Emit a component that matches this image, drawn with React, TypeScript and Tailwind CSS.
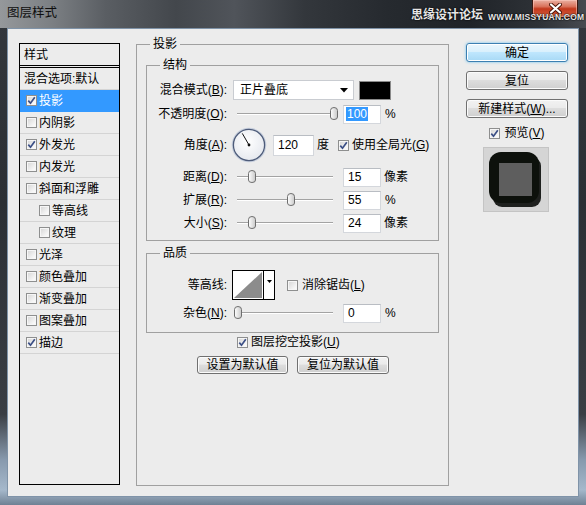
import React from "react";

function U({ children }: { children: React.ReactNode }) {
  return <span className="underline underline-offset-[1px]">{children}</span>;
}

function Check({ checked }: { checked?: boolean }) {
  return (
    <span className="inline-flex w-[11px] h-[11px] shrink-0 items-center justify-center border border-[#8e8f8f] bg-[linear-gradient(135deg,#d4d4d4_0%,#f4f4f4_70%,#ffffff_100%)] shadow-[inset_0_0_0_1px_#f6f6f6]">
      {checked && (
        <svg width="9" height="9" viewBox="0 0 9 9">
          <path d="M1.3 4.6 L3.5 7.2 L7.8 1.2" stroke="#3b4f86" strokeWidth="1.7" fill="none" />
        </svg>
      )}
    </span>
  );
}

function Label({ children }: { children: React.ReactNode }) {
  return <div className="w-[80px] shrink-0 text-right leading-[16px] whitespace-nowrap">{children}</div>;
}

function Thumb() {
  return (
    <svg width="8" height="13" viewBox="0 0 8 13">
      <defs>
        <linearGradient id="tg" x1="0" x2="1" y1="0" y2="0">
          <stop offset="0" stopColor="#ffffff" />
          <stop offset="1" stopColor="#c9c9c9" />
        </linearGradient>
      </defs>
      <path d="M0.5 3.5 Q0.5 0.5 4 0.5 Q7.5 0.5 7.5 3.5 L7.5 10 Q7.5 12.5 4 12.5 Q0.5 12.5 0.5 10 Z" fill="url(#tg)" stroke="#6e6e6e" strokeWidth="1" />
    </svg>
  );
}

function Slider({ thumb }: { thumb: string }) {
  return (
    <div className="relative ml-[6px] w-[105px] h-[20px] shrink-0">
      <div className="absolute left-[4px] right-[5px] top-[9px] h-[2px] border-t border-[#a3a3a3] border-b border-b-[#ffffff]" />
      <div className={`absolute top-[3px] ${thumb}`}>
        <Thumb />
      </div>
    </div>
  );
}

function Input({ children, w = "w-[38px]", h = "h-[19px]", ml = "ml-[5px]" }: { children: React.ReactNode; w?: string; h?: string; ml?: string }) {
  return (
    <div className={`${w} ${h} ${ml} shrink-0 bg-white border border-[#d4d7dc] border-t-[#b9bdc3] flex items-center pl-[2px] leading-[14px]`}>
      {children}
    </div>
  );
}

function Btn({ children, w = "w-full", h = "h-[19px]", def, extra = "" }: { children: React.ReactNode; w?: string; h?: string; def?: boolean; extra?: string }) {
  const base = def
    ? "border-[#3c7fb1] bg-[linear-gradient(180deg,#eaf6fd_0%,#d9f0fc_45%,#bee6fd_50%,#a7d9f5_100%)] shadow-[inset_0_0_0_1px_#ffffff,0_0_3px_#6cc1f0]"
    : "border-[#707070] bg-[linear-gradient(180deg,#f2f2f2_0%,#ebebeb_45%,#dddddd_50%,#cfcfcf_100%)] shadow-[inset_0_0_0_1px_#fbfbfb]";
  return (
    <div className={`${w} ${h} ${extra} shrink-0 border rounded-[3px] flex items-center justify-center leading-[14px] ${base}`}>
      {children}
    </div>
  );
}

const layers: { name: string; checked?: boolean; sel?: boolean; indent?: boolean }[] = [
  { name: "投影", checked: true, sel: true },
  { name: "内阴影" },
  { name: "外发光", checked: true },
  { name: "内发光" },
  { name: "斜面和浮雕" },
  { name: "等高线", indent: true },
  { name: "纹理", indent: true },
  { name: "光泽" },
  { name: "颜色叠加" },
  { name: "渐变叠加" },
  { name: "图案叠加" },
  { name: "描边", checked: true },
];

export default function App() {
  return (
    <div className="relative w-[586px] h-[505px] overflow-hidden flex flex-col text-[12px] text-black font-['Liberation_Sans','Noto_Sans_CJK_SC',sans-serif] bg-[linear-gradient(180deg,#34383d_0%,#2b2f34_40%,#3a3e44_82%,#8799ad_91%,#a5b8cb_97%,#6f8194_100%)]">
      {/* title bar */}
      <div className="h-[28px] shrink-0 flex items-start bg-[linear-gradient(90deg,#95989b_0%,#7b7f83_9%,#5a5e63_18%,#43474c_30%,#50545a_40%,#33373c_52%,#262a2f_66%,#1f2328_80%,#2e3237_92%,#474b50_100%)]">
        <span className="ml-[7px] mt-[5px] text-[12.5px] leading-[16px] text-[#0e0e0e]">图层样式</span>
        <div className="ml-auto mr-[8px] w-[46px] h-[18px] rounded-b-[5px] border border-t-0 border-[#3d1810] flex items-center justify-center bg-[linear-gradient(180deg,#eab0a2_0%,#d9735c_38%,#c2381c_52%,#cf5031_80%,#e0795a_100%)] shadow-[inset_0_0_0_1px_rgba(255,210,200,0.5)]">
          <svg width="13" height="11" viewBox="0 0 13 11">
            <path d="M2 1.5 L11 9.5 M11 1.5 L2 9.5" stroke="#4a1408" strokeWidth="4" strokeLinecap="round" />
            <path d="M2 1.5 L11 9.5 M11 1.5 L2 9.5" stroke="#ffffff" strokeWidth="2.2" strokeLinecap="round" />
          </svg>
        </div>
      </div>
      {/* watermark overlay */}
      <div className="absolute z-20 left-[411px] top-[9px] flex items-end gap-[5px] text-[#e6e6e6] [text-shadow:0_0_2px_#000,0_0_1px_#000]">
        <span className="text-[12px] leading-[13px] font-bold">思缘设计论坛</span>
        <span className="text-[8.5px] leading-[10px] font-bold tracking-[0.2px]">WWW.MISSYUAN.COM</span>
      </div>

      {/* client */}
      <div className="flex-1 mx-[7px] mb-[8px] border border-[#7f93a8] bg-[#ececec] flex items-start pl-[11px] pt-[14px]">
        {/* left list */}
        <div className="w-[101px] h-[442px] shrink-0 border border-black flex flex-col">
          <div className="h-[21px] flex items-center pl-[4px] leading-[16px]">样式</div>
          <div className="h-[3px] border-y border-black" />
          <div className="h-[22px] flex items-center pl-[4px] border-b border-[#d4d4d4] leading-[16px] whitespace-nowrap">混合选项:默认</div>
          {layers.map((l) => (
            <div
              key={l.name}
              className={`h-[22px] flex items-center border-b border-[#d4d4d4] leading-[16px] ${l.indent ? "pl-[19px]" : "pl-[6px]"} ${l.sel ? "bg-[#3399ff] text-white border-b-[#3399ff]" : ""}`}
            >
              <Check checked={l.checked} />
              <span className="ml-[2px]">{l.name}</span>
            </div>
          ))}
        </div>

        {/* middle group 投影 */}
        <div className="relative ml-[16px] mt-[1px] w-[313px] h-[442px] shrink-0 border border-[#a0a0a0] flex flex-col pl-[9px]">
          <span className="absolute left-[13px] top-[-9px] px-[3px] bg-[#ececec] leading-[16px]">投影</span>

          {/* 结构 */}
          <div className="relative mt-[20px] w-[293px] h-[176px] shrink-0 border border-[#a0a0a0] flex flex-col">
            <span className="absolute left-[13px] top-[-9px] px-[3px] bg-[#ececec] leading-[16px]">结构</span>

            <div className="mt-[14px] h-[20px] flex items-center">
              <Label>
                混合模式(<U>B</U>):
              </Label>
              <div className="ml-[6px] w-[121px] h-[20px] shrink-0 bg-white border border-[#c9ccd1] flex items-center pl-[6px] leading-[16px]">
                正片叠底
                <svg className="ml-auto mr-[5px]" width="8" height="5" viewBox="0 0 8 5">
                  <path d="M0 0 L8 0 L4 4.5 Z" fill="#000" />
                </svg>
              </div>
              <div className="ml-[5px] w-[32px] h-[19px] shrink-0 bg-black border border-[#8a8a8a]" />
            </div>

            <div className="mt-[4px] h-[20px] flex items-center">
              <Label>
                不透明度(<U>O</U>):
              </Label>
              <Slider thumb="left-[97px]" />
              <Input>
                <span className="bg-[#3399ff] text-white px-[1px]">100</span>
              </Input>
              <span className="ml-[4px]">%</span>
            </div>

            <div className="mt-[3px] h-[36px] flex items-center">
              <Label>
                角度(<U>A</U>):
              </Label>
              <div className="ml-[4px] w-[36px] h-[36px] shrink-0">
                <svg width="36" height="36" viewBox="0 0 36 36">
                  <defs>
                    <radialGradient id="dg" cx="0.45" cy="0.4" r="0.6">
                      <stop offset="0" stopColor="#ffffff" />
                      <stop offset="1" stopColor="#e6e9ef" />
                    </radialGradient>
                  </defs>
                  <circle cx="18" cy="18" r="16.6" fill="none" stroke="#c8d0de" strokeWidth="1.4" />
                  <circle cx="18" cy="18" r="15.6" fill="url(#dg)" stroke="#4d5b79" strokeWidth="1.3" />
                  <line x1="18" y1="18" x2="11.3" y2="6.4" stroke="#111" strokeWidth="1" />
                  <circle cx="18" cy="18" r="1.4" fill="#111" />
                </svg>
              </div>
              <Input w="w-[41px]" h="h-[21px]" ml="ml-[6px]">
                <span className="pl-[2px]">120</span>
              </Input>
              <span className="ml-[3px]">度</span>
              <span className="ml-[9px] flex items-center">
                <Check checked />
              </span>
              <span className="ml-[3px] whitespace-nowrap">
                使用全局光(<U>G</U>)
              </span>
            </div>

            <div className="mt-[4px] h-[20px] flex items-center">
              <Label>
                距离(<U>D</U>):
              </Label>
              <Slider thumb="left-[15px]" />
              <Input>
                <span className="pl-[2px]">15</span>
              </Input>
              <span className="ml-[3px]">像素</span>
            </div>

            <div className="mt-[3px] h-[20px] flex items-center">
              <Label>
                扩展(<U>R</U>):
              </Label>
              <Slider thumb="left-[54px]" />
              <Input>
                <span className="pl-[2px]">55</span>
              </Input>
              <span className="ml-[4px]">%</span>
            </div>

            <div className="mt-[3px] h-[20px] flex items-center">
              <Label>
                大小(<U>S</U>):
              </Label>
              <Slider thumb="left-[15px]" />
              <Input>
                <span className="pl-[2px]">24</span>
              </Input>
              <span className="ml-[3px]">像素</span>
            </div>
          </div>

          {/* 品质 */}
          <div className="relative mt-[12px] w-[293px] h-[80px] shrink-0 border border-[#a0a0a0] flex flex-col">
            <span className="absolute left-[13px] top-[-9px] px-[3px] bg-[#ececec] leading-[16px]">品质</span>

            <div className="mt-[16px] h-[30px] flex items-center">
              <Label>等高线:</Label>
              <div className="ml-[5px] w-[43px] h-[30px] shrink-0 border border-black bg-white flex">
                <svg width="30" height="28" viewBox="0 0 30 28" className="shrink-0">
                  <path d="M1 27 L29 1 L29 27 Z" fill="#8c8c8c" />
                </svg>
                <div className="w-[11px] h-full border-l border-black flex justify-center pt-[9px]">
                  <svg width="5" height="3" viewBox="0 0 5 3">
                    <path d="M0 0 L5 0 L2.5 3 Z" fill="#000" />
                  </svg>
                </div>
              </div>
              <span className="ml-[12px] flex items-center">
                <Check />
              </span>
              <span className="ml-[4px] whitespace-nowrap">
                消除锯齿(<U>L</U>)
              </span>
            </div>

            <div className="mt-[3px] h-[20px] flex items-center">
              <Label>
                杂色(<U>N</U>):
              </Label>
              <Slider thumb="left-[1px]" />
              <Input>
                <span className="pl-[2px]">0</span>
              </Input>
              <span className="ml-[4px]">%</span>
            </div>
          </div>

          <div className="mt-[1px] h-[16px] ml-[91px] flex items-center">
            <Check checked />
            <span className="ml-[3px] leading-[16px] whitespace-nowrap">
              图层挖空投影(<U>U</U>)
            </span>
          </div>

          <div className="mt-[6px] ml-[51px] flex gap-[9px]">
            <Btn w="w-[91px]" h="h-[18px]">设置为默认值</Btn>
            <Btn w="w-[92px]" h="h-[18px]">复位为默认值</Btn>
          </div>
        </div>

        {/* right column */}
        <div className="ml-[17px] w-[102px] shrink-0 flex flex-col">
          <Btn def>确定</Btn>
          <Btn extra="mt-[9px]">复位</Btn>
          <Btn extra="mt-[9px]">
            新建样式(<U>W</U>)...
          </Btn>
          <div className="mt-[7px] h-[16px] flex items-center justify-center">
            <Check checked />
            <span className="ml-[4px] leading-[16px]">
              预览(<U>V</U>)
            </span>
          </div>
          <div className="mt-[6px] ml-[17px] w-[66px] h-[65px] bg-[#d5d5d5] border border-[#c4c4c4]">
            <svg width="64" height="63" viewBox="0 0 64 63">
              <rect x="9" y="9" width="48" height="50" rx="9" fill="#0a0c0a" opacity="0.9" />
              <rect x="5" y="4" width="50" height="51" rx="12" fill="#0d110c" />
              <rect x="15" y="15" width="33" height="33" fill="#5e5e5e" />
            </svg>
          </div>
        </div>
      </div>
    </div>
  );
}
